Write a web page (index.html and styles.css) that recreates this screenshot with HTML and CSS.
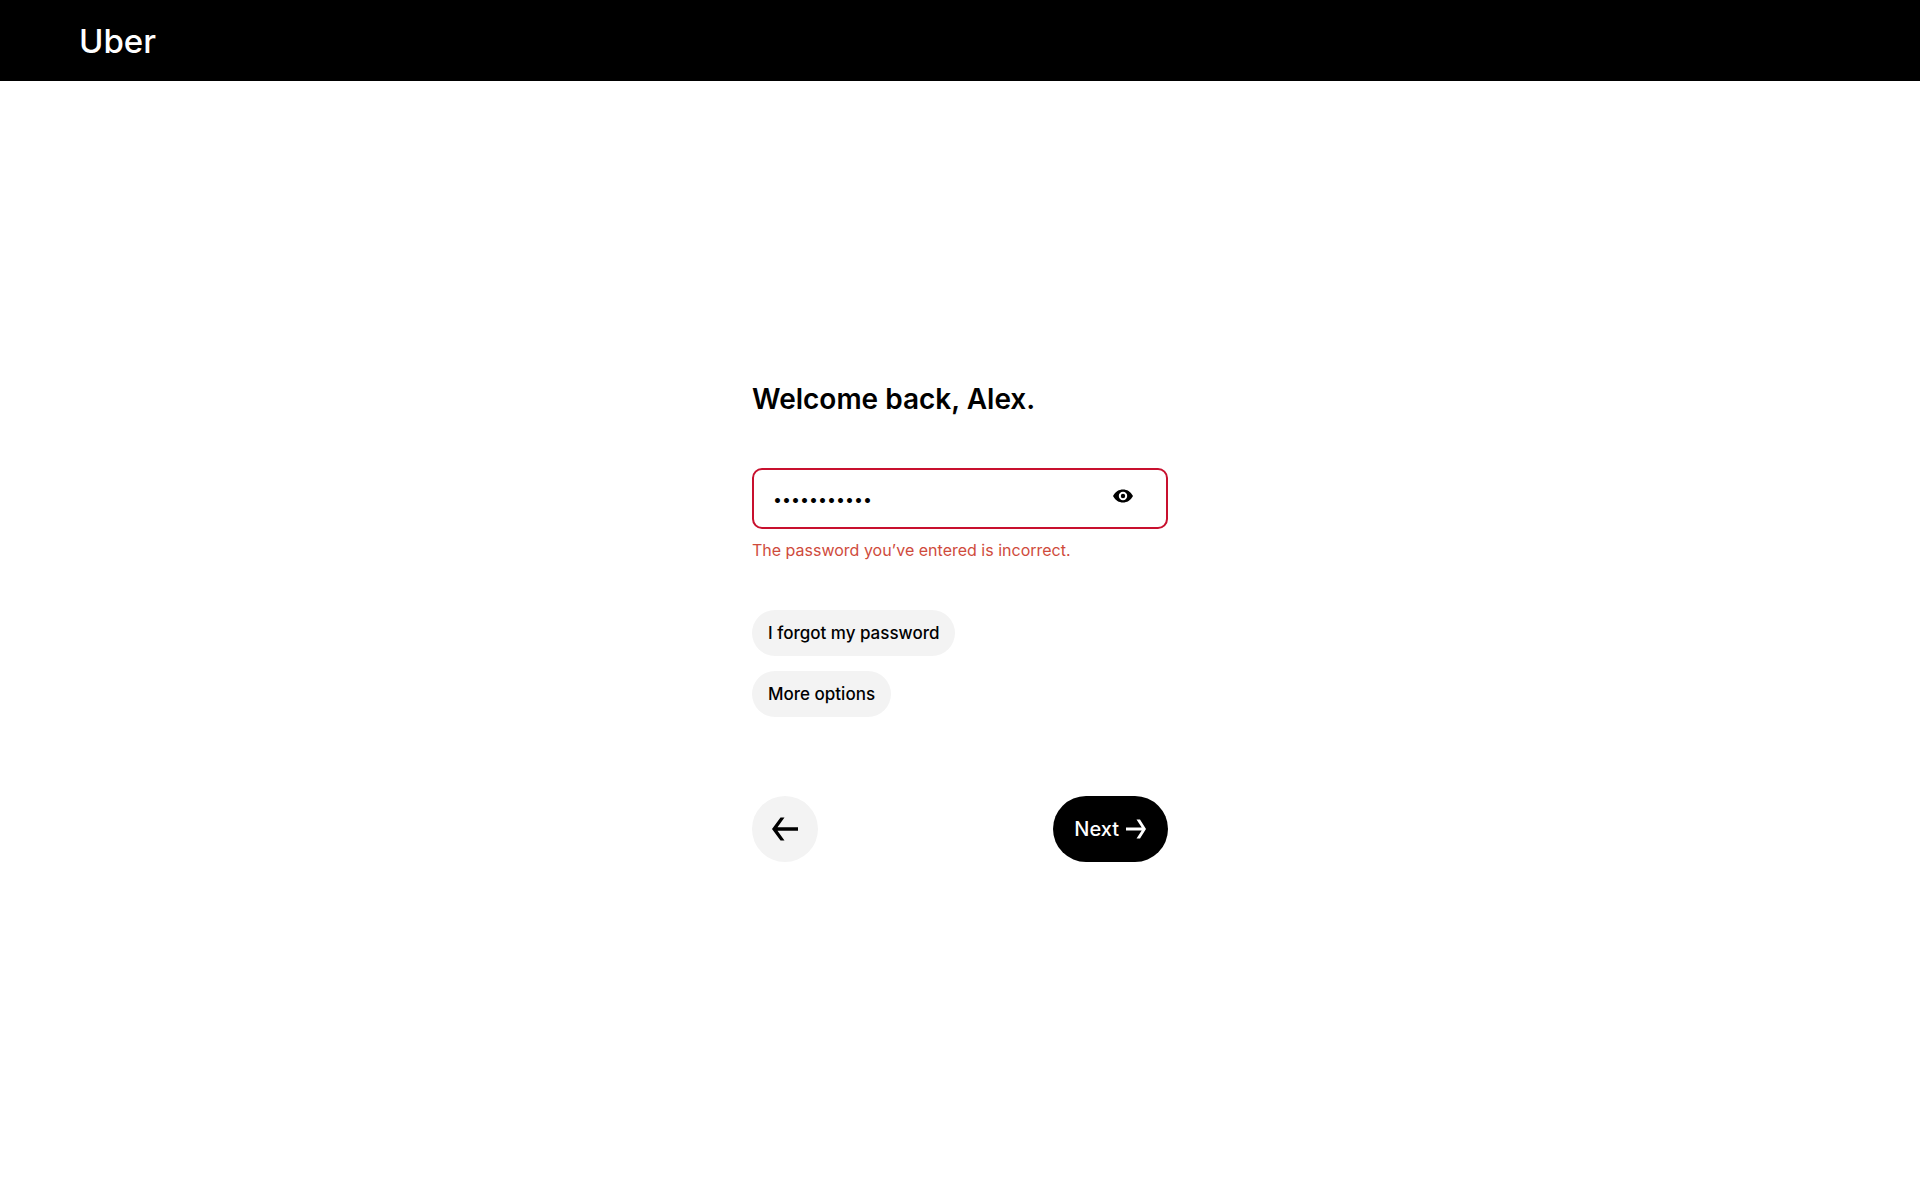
FILE: index.html
```html
<!DOCTYPE html>
<html lang="en">
<head>
<meta charset="utf-8">
<meta name="viewport" content="width=device-width, initial-scale=1">
<title>Uber</title>
<link rel="stylesheet" href="styles.css">
</head>
<body>
<header class="site-header"><a class="logo" href="#">Uber</a></header>
<main class="page">
  <form class="login">
    <h1 class="title"><label for="password">Welcome back, Alex.</label></h1>
    <div class="field">
      <input class="field-input" id="password" type="password" value="password123" aria-invalid="true" aria-describedby="password-error">
      <button class="reveal" type="button" aria-label="Show password">
        <svg class="icon-eye" viewBox="0 0 20 14" aria-hidden="true">
          <path fill-rule="evenodd" d="M0 7C2.500 2.500 6 0.500 10 0.500S17.500 2.500 20 7C17.500 11.500 14 13.500 10 13.500S2.500 11.500 0 7ZM10 2.800A4.200 4.200 0 1 0 10 11.200A4.200 4.200 0 1 0 10 2.800Z"/>
          <circle cx="10" cy="7" r="2.200"/>
        </svg>
      </button>
    </div>
    <p class="error" id="password-error">The password you’ve entered is incorrect.</p>
    <div class="options">
      <button class="pill" type="button">I forgot my password</button>
      <button class="pill" type="button">More options</button>
    </div>
    <div class="actions">
      <button class="back" type="button" aria-label="Back">
        <svg class="icon-back" viewBox="0 0 26 24" aria-hidden="true">
          <path d="M0 12L8.500 0.500H12.500L5.500 10.200H26V13.800H5.500L12.500 23.500H8.500Z"/>
        </svg>
      </button>
      <button class="next" type="submit">Next
        <svg class="icon-next" viewBox="0 0 20 20" aria-hidden="true">
          <path d="M20 10L14 0.500H10.500L15.700 8.600H0V11.400H15.700L10.500 19.500H14Z"/>
        </svg>
      </button>
    </div>
  </form>
</main>
</body>
</html>
```
FILE: styles.css
```css
* {
  box-sizing: border-box;
}

body {
  margin: 0;
  background: #fff;
  color: #000;
  font-family: Inter, "Liberation Sans", sans-serif;
}

button {
  margin: 0;
  padding: 0;
  border: 0;
  color: inherit;
  font: inherit;
  cursor: pointer;
}

svg {
  display: block;
  fill: currentColor;
}

.site-header {
  display: flex;
  align-items: center;
  height: 81px;
  padding: 0 79px;
  background: #000;
}

.logo {
  color: #fff;
  font-size: 33px;
  font-weight: 500;
  line-height: 40px;
  text-decoration: none;
}

.page {
  display: flex;
  justify-content: center;
  padding: 298px 16px 64px;
}

.login {
  width: 100%;
  max-width: 416px;
}

.title {
  margin: 0 0 49px;
  font-size: 28px;
  font-weight: 600;
  line-height: 40px;
  white-space: nowrap;
}

.field {
  display: flex;
  align-items: center;
  height: 61px;
  padding: 0 33px 0 19px;
  border: 2px solid #c8102e;
  border-radius: 10px;
}

.field-input {
  flex: 1;
  min-width: 0;
  height: 48px;
  padding: 0;
  border: 0;
  outline: 0;
  background: none;
  color: #000;
  font: 400 16px/24px Inter, sans-serif;
}

.reveal {
  padding: 4px 0 10px;
  background: none;
}

.icon-eye {
  width: 20px;
  height: 14px;
}

.error {
  margin: 9px 0 0;
  color: #cf4b3c;
  font-size: 16px;
  line-height: 24px;
}

.options {
  display: flex;
  flex-direction: column;
  align-items: flex-start;
  gap: 15px;
  margin-top: 48px;
}

.pill {
  height: 46px;
  padding: 0 16px;
  border-radius: 23px;
  background: #f3f3f3;
  font-size: 17px;
  font-weight: 500;
}

.actions {
  display: flex;
  justify-content: space-between;
  margin-top: 79px;
}

.back {
  display: grid;
  place-items: center;
  width: 66px;
  height: 66px;
  border-radius: 50%;
  background: #f3f3f3;
}

.icon-back {
  width: 26px;
  height: 24px;
}

.next {
  display: flex;
  align-items: center;
  gap: 7px;
  height: 66px;
  padding: 0 22px 0 21px;
  border-radius: 33px;
  background: #000;
  color: #fff;
  font-size: 20px;
  font-weight: 500;
}

.icon-next {
  width: 20px;
  height: 20px;
}
```
